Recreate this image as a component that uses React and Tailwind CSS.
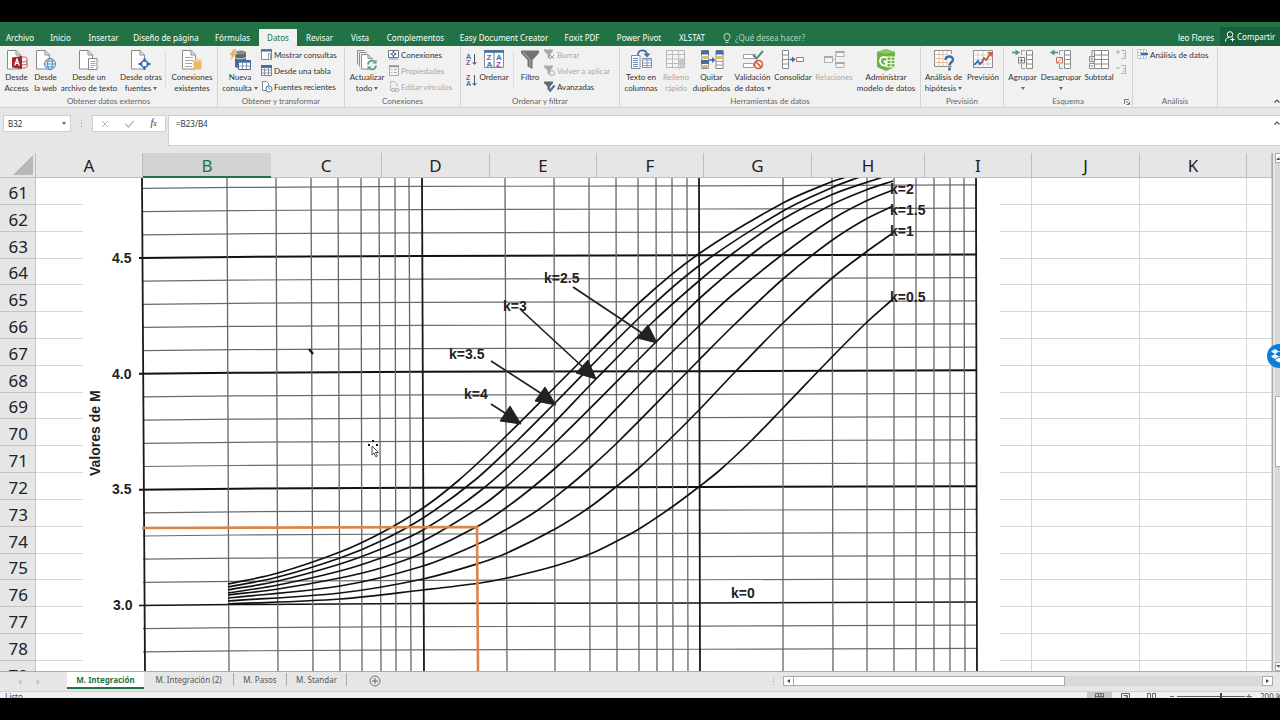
import { Fragment } from 'react';

const menuTabs = [
  { label: 'Archivo', width: 'w-[40px]' },
  { label: 'Inicio', width: 'w-[41px]' },
  { label: 'Insertar', width: 'w-[45px]' },
  { label: 'Diseño de página', width: 'w-[80px]' },
  { label: 'Fórmulas', width: 'w-[53px]' },
  { label: 'Datos', width: 'w-[38px]', active: true },
  { label: 'Revisar', width: 'w-[45px]' },
  { label: 'Vista', width: 'w-[36px]' },
  { label: 'Complementos', width: 'w-[75px]' },
  { label: 'Easy Document Creator', width: 'w-[102px]' },
  { label: 'Foxit PDF', width: 'w-[54px]' },
  { label: 'Power Pivot', width: 'w-[60px]' },
  { label: 'XLSTAT', width: 'w-[46px]' },
];

const columns = [
  { name: 'A', width: 'w-[107px]' },
  { name: 'B', width: 'w-[128px]', selected: true },
  { name: 'C', width: 'w-[111px]' },
  { name: 'D', width: 'w-[108px]' },
  { name: 'E', width: 'w-[107px]' },
  { name: 'F', width: 'w-[107px]' },
  { name: 'G', width: 'w-[108px]' },
  { name: 'H', width: 'w-[113px]' },
  { name: 'I', width: 'w-[107px]' },
  { name: 'J', width: 'w-[108px]' },
  { name: 'K', width: 'w-[107px]' },
  { name: '', width: '' },
];

const rows = Array.from({ length: 19 }, (_, i) => 61 + i);
const shortRows = [64, 69, 75];

/* ---------- Icons ---------- */

function Icon({ w = 22, h = 22, box = '0 0 22 22', children }) {
  return (
    <svg width={w} height={h} viewBox={box} fill="none" className="shrink-0" aria-hidden="true">
      {children}
    </svg>
  );
}

const Page = ({ x = 0 }) => (
  <path d={`M${x + 1.5} 1.5h8.5l4.5 4.5v14h-13zM${x + 10} 1.5v4.5h4.5`} fill="#fff" stroke="#8a8a8a" />
);

const AccessIcon = () => (
  <Icon>
    <Page />
    <path d="M14 9.5c0-2 7-2 7 0v8c0 2-7 2-7 0z" fill="#fff" stroke="#c0504d" />
    <path d="M14 12c2 1.3 5 1.3 7 0M14 15c2 1.3 5 1.3 7 0" stroke="#c0504d" />
    <path d="M6 8.5l10-1.5v13L6 18.5z" fill="#a4262c" />
    <path d="M8.7 16.5l2.3-6.3 2.3 6.3M9.5 14.4h3" stroke="#fff" strokeWidth="1.3" />
  </Icon>
);

const WebIcon = () => (
  <Icon>
    <Page />
    <circle cx="15" cy="15" r="5.5" fill="#fff" stroke="#4f86bf" />
    <ellipse cx="15" cy="15" rx="2.4" ry="5.5" stroke="#4f86bf" />
    <path d="M9.5 15h11M10.5 12.2h9M10.5 17.8h9" stroke="#4f86bf" />
  </Icon>
);

const TextFileIcon = () => (
  <Icon>
    <Page />
    <path d="M10.5 9.5h8.5v11h-8.5z" fill="#fff" stroke="#8a8a8a" />
    <path d="M12.5 12.5h5M12.5 14.5h5M12.5 16.5h5M12.5 18.5h3" stroke="#a5a5a5" />
  </Icon>
);

const OtherSourcesIcon = () => (
  <Icon>
    <Page />
    <path d="M14.5 10.5l4.5 4.5-4.5 4.5-4.5-4.5z" fill="#fff" stroke="#3a6fb0" strokeWidth="1.5" />
    <path d="M14.5 9v4M14.5 17v4M8.5 15h4M16.5 15h4" stroke="#3a6fb0" strokeWidth="1.8" />
  </Icon>
);

const ExistingIcon = () => (
  <Icon>
    <Page />
    <path d="M4 8.5h8M4 11.5h8M4 14.5h7M4 17.5h7" stroke="#a5a5a5" />
    <path d="M12.5 11v8c0 2.2 8 2.2 8 0v-8z" fill="#e8b964" />
    <ellipse cx="16.5" cy="11" rx="4" ry="1.6" fill="#f4d594" />
  </Icon>
);

const NewQueryIcon = () => (
  <Icon w={24} box="0 0 24 22">
    <path d="M7 3.5v14c0 2 11 2 11 0v-14z" fill="#666" />
    <ellipse cx="12.5" cy="3.5" rx="5.5" ry="2" fill="#8a8a8a" />
    <path d="M7 8.5c2 1.8 9 1.8 11 0" stroke="#ddd" />
    <path d="M5 0h4L6.5 4H9L2 12l1.5-5.5H1z" fill="#edb45c" stroke="#f1f1f1" strokeWidth=".6" />
    <path d="M10.5 11.5h12v9h-12z" fill="#fff" stroke="#3f6ea8" />
    <path d="M10.5 12.5h12" stroke="#3f6ea8" strokeWidth="2.5" />
    <path d="M14.5 13v7M18.5 13v7M11 17h11" stroke="#8c9db2" />
  </Icon>
);

const WindowIcon = () => (
  <Icon w={12} h={12} box="0 0 12 12">
    <path d="M.5.5h10v10H.5z" fill="#fff" stroke="#7d8b9b" />
    <path d="M0 1.5h11" stroke="#3f6ea8" strokeWidth="2" />
    <path d="M7.5 4.5h2v6h-2z" stroke="#9aa" />
  </Icon>
);

const TableIcon = () => (
  <Icon w={12} h={12} box="0 0 12 12">
    <path d="M.5.5h10v10H.5z" fill="#fff" stroke="#6d7f94" />
    <path d="M0 1.5h11" stroke="#3f6ea8" strokeWidth="3" />
    <path d="M3.5 2v9M7.5 2v9M0 5h11M0 8h11" stroke="#8796a8" />
  </Icon>
);

const RecentIcon = () => (
  <Icon w={12} h={12} box="0 0 12 12">
    <path d="M1.5.5h4l2 2v7h-6z" fill="#fff" stroke="#8a8a8a" />
    <circle cx="8" cy="8" r="3" fill="#fff" stroke="#4f7fb5" />
    <path d="M8 6v2h1.5" stroke="#4f7fb5" strokeWidth=".8" />
  </Icon>
);

const RefreshIcon = () => (
  <Icon>
    <path d="M1.5 15.5v-14h7M3.5 17.5v-14h7" stroke="#8a8a8a" />
    <path d="M5.5 5.5h6.5l4 4v10.5H5.5zM12 5.5v4h4" fill="#fff" stroke="#8a8a8a" />
    <circle cx="16" cy="16" r="5.5" fill="#f1f1f1" />
    <path d="M12 15.5a4 4 0 0 1 7-2.5M20 16.5a4 4 0 0 1-7 2.5" stroke="#5f9f80" strokeWidth="1.8" />
    <path d="M20.5 10.5v4h-4zM11.5 21.5v-4h4z" fill="#5f9f80" />
  </Icon>
);

const ConnIcon = () => (
  <Icon w={12} h={12} box="0 0 12 12">
    <path d="M.5 1.5h10v7H.5z" fill="#fff" stroke="#777" />
    <path d="M5.5 2v6M2.5 5h6" stroke="#3a6fb0" strokeWidth="1.5" />
    <circle cx="5.5" cy="5" r="1.5" fill="#fff" stroke="#3a6fb0" />
    <path d="M1 10h9" stroke="#999" />
  </Icon>
);

const PropsIcon = () => (
  <Icon w={12} h={12} box="0 0 12 12">
    <path d="M1.5.5h9v10h-9z" fill="#f6f6f6" stroke="#aaa" />
    <path d="M1 1.5h10" stroke="#999" strokeWidth="1.5" />
    <path d="M3 4.5h1.5M6 4.5h3M3 7.5h1.5M6 7.5h3" stroke="#aaa" />
  </Icon>
);

const LinksIcon = () => (
  <Icon w={12} h={12} box="0 0 12 12">
    <path d="M2.5 10V.5h4l2.5 2.5v3" stroke="#bbb" />
    <ellipse cx="5.5" cy="9" rx="2" ry="1.5" stroke="#aaa" />
    <ellipse cx="9" cy="9" rx="2" ry="1.5" stroke="#aaa" />
  </Icon>
);

// small A/Z stack with a down arrow
function SortIcon({ top, bottom, topColor, bottomColor }) {
  return (
    <Icon w={11} h={13} box="0 0 11 13">
      <text x="0" y="6" fontSize="7" fontWeight="bold" fontFamily="Liberation Sans, sans-serif" fill={topColor}>{top}</text>
      <text x="0" y="12" fontSize="7" fontWeight="bold" fontFamily="Liberation Sans, sans-serif" fill={bottomColor}>{bottom}</text>
      <path d="M8.5 1v10M6.5 9l2 2.5 2-2.5" stroke="#555" />
    </Icon>
  );
}

const SortBigIcon = () => (
  <Icon>
    <path d="M1.5 1.5h19v17h-19z" fill="#fff" stroke="#8a8a8a" />
    <path d="M1 2.5h20" stroke="#3f6ea8" strokeWidth="2.5" />
    <path d="M11 3v16" stroke="#777" />
    <g fontSize="8" fontWeight="bold" fontFamily="Liberation Sans, sans-serif">
      <text x="3.5" y="11" fill="#8a4fa3">Z</text>
      <text x="3.5" y="18" fill="#3a6fb0">A</text>
      <text x="13" y="11" fill="#3a6fb0">A</text>
      <text x="13" y="18" fill="#8a4fa3">Z</text>
    </g>
  </Icon>
);

const FilterIcon = () => (
  <Icon>
    <path d="M2 1.5h18v2.5l-6.5 7V20l-5-2.5V11L2 4z" fill="#737373" />
    <path d="M4 3l7 7.5v8" stroke="#b5b5b5" />
  </Icon>
);

function FunnelSmall({ color, mark }) {
  return (
    <Icon w={12} h={12} box="0 0 12 12">
      <path d="M0 .5h9v1.5L6 5.5V10L3.5 8.5v-3L0 2z" fill={color} />
      {mark}
    </Icon>
  );
}

const TextColumnsIcon = () => (
  <Icon>
    <path d="M8 6c0-6 8-6 9-1" stroke="#3a6fb0" strokeWidth="1.6" />
    <path d="M13.5 4.5h7L17 8.5z" fill="#3a6fb0" />
    <path d="M1.5 6.5h8.5v13H1.5z" fill="#fff" stroke="#8a8a8a" />
    <path d="M3 9.5h5M3 11.5h5M3 13.5h5M3 15.5h5M3 17.5h5" stroke="#5f8fc4" />
    <path d="M12.5 9.5h9v9h-9z" fill="#fff" stroke="#8a8a8a" />
    <path d="M12 11h10M12.5 14h9M12.5 16.5h9M17 10v9" stroke="#7fa3cc" strokeWidth="1.2" />
  </Icon>
);

const FlashFillIcon = () => (
  <Icon>
    <path d="M1.5 1.5h18v17h-18z" fill="#f4f4f4" stroke="#b5b5b5" />
    <path d="M1.5 5.5h18M1.5 10h18M1.5 14.5h18M7.5 1.5v17M13.5 1.5v17" stroke="#bdbdbd" />
    <path d="M15 10h6l-3 4h3l-7 7.5 1.5-5h-3z" fill="#c4c4c4" />
  </Icon>
);

const DuplicatesIcon = () => (
  <Icon w={24} box="0 0 24 22">
    <path d="M1.5 1.5h7v18h-7zM16 1.5h7v18h-7z" fill="#fff" stroke="#8a8a8a" />
    <path d="M1 3.5h8M1 13h8M16 3.5h7.5" stroke="#3f6ea8" strokeWidth="4" />
    <path d="M1 8.5h8M1 17.5h8M16 8.5h7.5" stroke="#e0b973" strokeWidth="3" />
    <path d="M16 12.5h7M16 16h7" stroke="#9a9a9a" />
    <path d="M9 11h5" stroke="#3a6fb0" strokeWidth="1.5" />
    <path d="M12 8l3.5 3-3.5 3z" fill="#3a6fb0" />
  </Icon>
);

const ValidationIcon = () => (
  <Icon>
    <path d="M1.5 5.5h12v4h-12zM1.5 14.5h10v4h-10z" fill="#fff" stroke="#a0a0a0" />
    <path d="M11 6l3.5 3.5L21 2" stroke="#4f9678" strokeWidth="2" />
    <circle cx="16.5" cy="15.5" r="4" fill="#f1f1f1" stroke="#cf5b3c" strokeWidth="1.6" />
    <path d="M13.7 12.7l5.6 5.6" stroke="#cf5b3c" strokeWidth="1.6" />
  </Icon>
);

const ConsolidateIcon = () => (
  <Icon w={24} box="0 0 24 22">
    <path d="M1.5 1.5h6v18h-6zM1.5 6h6M1.5 10.5h6M1.5 15h6" fill="#fff" stroke="#8a8a8a" />
    <path d="M8.5 10.5h4" stroke="#3a6fb0" strokeWidth="1.5" />
    <path d="M11 7.5l3.5 3-3.5 3z" fill="#3a6fb0" />
    <path d="M15.5 8.5h7v4h-7z" fill="#fff" stroke="#cf6a50" />
  </Icon>
);

const RelationsIcon = () => (
  <Icon>
    <path d="M9 10.5h3.5M12.5 5v11" stroke="#bbb" />
    <path d="M1.5 7.5h8v6h-8zM13 2.5h8v5h-8zM13 13.5h8v5h-8z" fill="#f6f6f6" stroke="#b0b0b0" />
    <path d="M1 8h9M12.5 3h9M12.5 14h9" stroke="#aaa" strokeWidth="2" />
  </Icon>
);

const DataModelIcon = () => (
  <Icon>
    <path d="M2 3l9-3 9 3v15l-9 4-9-4z" fill="#6cb33f" />
    <path d="M2 3l9-3 9 3-9 2z" fill="#8cc866" />
    <path d="M12 8.5c-5-1.5-7 .5-7 3.5s2 5 6 4.5v-4H8.5" stroke="#fff" strokeWidth="1.8" />
    <path d="M12 8h8v10h-8zM12 11.3h8M12 14.6h8M16 8v10" fill="#6cb33f" stroke="#fff" />
  </Icon>
);

const WhatIfIcon = () => (
  <Icon>
    <path d="M1.5 1.5h17v16h-17z" fill="#fff" stroke="#8a8a8a" />
    <path d="M1.5 5.5h17M1.5 9.5h17M1.5 13.5h17M6 1.5v16M10 1.5v16M14 1.5v16" stroke="#e0b9a0" />
    <path d="M12.5 11c0-5 8-5 8-.5 0 3-4 2.5-4 6.500" stroke="#f1f1f1" strokeWidth="5" />
    <path d="M12.5 11c0-4.5 7.5-4.5 7.5-.5 0 3-3.5 2.5-3.5 6" stroke="#3a6fb0" strokeWidth="2.4" />
    <path d="M16.5 18.5v3" stroke="#3a6fb0" strokeWidth="2.6" />
  </Icon>
);

const ForecastIcon = () => (
  <Icon>
    <path d="M1.5 1.5h19v17h-19z" fill="#fff" stroke="#8a8a8a" />
    <path d="M1.5 6h19M1.5 10.5h19M1.5 15h19M6 1.5v17M11 1.5v17M16 1.5v17" stroke="#ccc" />
    <path d="M2 16l4-4 2 3 3-3" stroke="#3a6fb0" strokeWidth="1.8" />
    <path d="M10 13l2-4 2 2 5-7" stroke="#cf5b3c" strokeWidth="1.8" />
    <path d="M15 3h5.5v5.500z" fill="#cf5b3c" />
  </Icon>
);

function GroupIcon({ out }) {
  return (
    <Icon>
      <path d="M14.5 1.5h6v18h-6zM14.5 6h6M14.5 10.5h6M14.5 15h6" fill="#fff" stroke="#8a8a8a" />
      <path d="M13 1.5h-3.5V6M9.5 15v4.5H13" stroke="#9a9a9a" />
      {out ? (
        <>
          <path d="M2 3.5h6" stroke="#4f9678" strokeWidth="1.6" />
          <path d="M4.5.5L0 3.5l4.5 3z" fill="#4f9678" />
          <path d="M6.5 8.5h6v5.500h-6zM7 14l5.500-6" fill="#fff" stroke="#cf6a50" />
        </>
      ) : (
        <>
          <path d="M0 3.5h6" stroke="#4f9678" strokeWidth="1.6" />
          <path d="M3.5.5L8 3.5l-4.500 3z" fill="#4f9678" />
          <path d="M6.5 8.5h6v5.500h-6zM9.500 9.500v4M7.500 11.300h4" fill="#fff" stroke="#777" />
        </>
      )}
    </Icon>
  );
}

const SubtotalIcon = () => (
  <Icon>
    <path d="M6.5 1.5h14v18h-14zM6.5 6h14M6.5 10.5h14M6.5 15h14M13.5 1.5v18" fill="#fff" stroke="#8a8a8a" />
    <path d="M1.5 7.5h5v5h-5zM1.5 14.5h5v5h-5zM4 8.5v3M2.5 10h3M2.5 17h3M4 7V1.5h2" fill="#fff" stroke="#8a8a8a" />
  </Icon>
);

const DetailIcon = ({ plus }) => (
  <Icon w={11} h={11} box="0 0 11 11">
    <path d={plus ? 'M0 3h4M2 1v4' : 'M0 4h4'} stroke="#aaa" />
    <path d="M5 1.5h5M7 4.5h3M5 9.5h5M7 7h3M9.5 1v9" stroke="#b8b8b8" />
  </Icon>
);

const AnalysisIcon = () => (
  <Icon w={12} h={12} box="0 0 12 12">
    <path d="M.5.5h9v9h-9zM.5 3.5h9M.5 6.5h9M3.5.5v9M6.5.5v9" fill="#fff" stroke="#bcc5d0" />
    <path d="M4 5h7" stroke="#3a6fb0" strokeWidth="2" />
  </Icon>
);

const Caret = ({ className = '' }) => (
  <svg width="4" height="3" viewBox="0 0 4 3" className={`inline-block align-middle ${className}`} aria-hidden="true">
    <path d="M0 0h4L2 3z" fill="#666" />
  </svg>
);

/* ---------- Ribbon pieces ---------- */

function BigButton({ icon, lines, width, caret, disabled }) {
  return (
    <button
      type="button"
      disabled={disabled}
      className={`flex shrink-0 flex-col items-center pt-[2px] whitespace-nowrap ${width} ${disabled ? 'text-[#a8a8a8]' : 'text-[#333]'}`}
    >
      <span className="mb-px">{icon}</span>
      {lines.map((line, i) => (
        <span key={i} className="leading-[11px]">
          {line}
          {caret && i === lines.length - 1 && <Caret className={line ? 'ml-[2px]' : ''} />}
        </span>
      ))}
    </button>
  );
}

function SmallButton({ icon, label, disabled }) {
  return (
    <button
      type="button"
      disabled={disabled}
      className={`flex h-4 items-center gap-px whitespace-nowrap ${disabled ? 'text-[#a8a8a8]' : 'text-[#333]'}`}
    >
      {icon}
      {label}
    </button>
  );
}

function Group({ label, width, launcher, children }) {
  return (
    <section className={`relative mt-px flex shrink-0 flex-col justify-between border-r border-[#d2d2d2] ${width}`}>
      <div className="flex h-[49px] items-start px-px">{children}</div>
      <h2 className="text-center leading-[11px] text-[#666]">{label}</h2>
      {launcher && (
        <svg width="6" height="6" viewBox="0 0 6 6" className="absolute right-[2px] bottom-[2px]" fill="none" aria-hidden="true">
          <path d="M.5 5V.5H5M2 2l3 3M5.500 2.500v3h-3" stroke="#777" />
        </svg>
      )}
    </section>
  );
}

const Divider = () => <div className="mx-[2px] mt-[4px] h-[38px] w-px shrink-0 bg-[#dcdcdc]" />;

function Ribbon() {
  return (
    <div className="flex h-[62px] shrink-0 overflow-hidden border-b border-[#d2d2d2] bg-[#f1f1f1] font-['Lato','Noto_Sans',sans-serif]">
      <Group label="Obtener datos externos" width="w-[218px]">
        <BigButton icon={<AccessIcon />} lines={['Desde', 'Access']} width="w-[31px]" />
        <BigButton icon={<WebIcon />} lines={['Desde', 'la web']} width="w-[27px]" />
        <BigButton icon={<TextFileIcon />} lines={['Desde un', 'archivo de texto']} width="w-[60px]" />
        <BigButton icon={<OtherSourcesIcon />} lines={['Desde otras', 'fuentes']} width="w-[44px]" caret />
        <Divider />
        <BigButton icon={<ExistingIcon />} lines={['Conexiones', 'existentes']} width="w-[48px]" />
      </Group>
      <Group label="Obtener y transformar" width="w-[127px]">
        <BigButton icon={<NewQueryIcon />} lines={['Nueva', 'consulta']} width="w-[42px]" caret />
        <div>
          <SmallButton icon={<WindowIcon />} label="Mostrar consultas" />
          <SmallButton icon={<TableIcon />} label="Desde una tabla" />
          <SmallButton icon={<RecentIcon />} label="Fuentes recientes" />
        </div>
      </Group>
      <Group label="Conexiones" width="w-[116px]">
        <BigButton icon={<RefreshIcon />} lines={['Actualizar', 'todo']} width="w-[42px]" caret />
        <div>
          <SmallButton icon={<ConnIcon />} label="Conexiones" />
          <SmallButton icon={<PropsIcon />} label="Propiedades" disabled />
          <SmallButton icon={<LinksIcon />} label="Editar vínculos" disabled />
        </div>
      </Group>
      <Group label="Ordenar y filtrar" width="w-[159px]">
        <div className="flex w-[15px] flex-col items-end gap-2 pt-[6px]">
          <button type="button" aria-label="Ordenar de A a Z">
            <SortIcon top="A" bottom="Z" topColor="#3a6fb0" bottomColor="#8a4fa3" />
          </button>
          <button type="button" aria-label="Ordenar de Z a A">
            <SortIcon top="Z" bottom="A" topColor="#8a4fa3" bottomColor="#3a6fb0" />
          </button>
        </div>
        <BigButton icon={<SortBigIcon />} lines={['Ordenar']} width="w-[34px]" />
        <Divider />
        <BigButton icon={<FilterIcon />} lines={['Filtro']} width="w-[28px]" />
        <div>
          <SmallButton
            icon={<FunnelSmall color="#aaa" mark={<path d="M6 6l4 4M10 6l-4 4" stroke="#999" />} />}
            label="Borrar"
            disabled
          />
          <SmallButton
            icon={<FunnelSmall color="#aaa" mark={<circle cx="8" cy="8" r="2.5" fill="#f1f1f1" stroke="#aaa" />} />}
            label="Volver a aplicar"
            disabled
          />
          <SmallButton
            icon={<FunnelSmall color="#666" mark={<path d="M5.5 10.5l5-6" stroke="#3a6fb0" strokeWidth="2" />} />}
            label="Avanzadas"
          />
        </div>
      </Group>
      <Group label="Herramientas de datos" width="w-[301px]">
        <BigButton icon={<TextColumnsIcon />} lines={['Texto en', 'columnas']} width="w-[40px]" />
        <BigButton icon={<FlashFillIcon />} lines={['Relleno', 'rápido']} width="w-[30px]" disabled />
        <BigButton icon={<DuplicatesIcon />} lines={['Quitar', 'duplicados']} width="w-[41px]" />
        <BigButton icon={<ValidationIcon />} lines={['Validación', 'de datos']} width="w-[41px]" caret />
        <BigButton icon={<ConsolidateIcon />} lines={['Consolidar']} width="w-[40px]" />
        <BigButton icon={<RelationsIcon />} lines={['Relaciones']} width="w-[42px]" disabled />
        <BigButton icon={<DataModelIcon />} lines={['Administrar', 'modelo de datos']} width="w-[62px]" />
      </Group>
      <Group label="Previsión" width="w-[83px]">
        <BigButton icon={<WhatIfIcon />} lines={['Análisis de', 'hipótesis']} width="w-[43px]" caret />
        <BigButton icon={<ForecastIcon />} lines={['Previsión']} width="w-[36px]" />
      </Group>
      <Group label="Esquema" width="w-[129px]" launcher>
        <BigButton icon={<GroupIcon />} lines={['Agrupar', '']} width="w-[35px]" caret />
        <BigButton icon={<GroupIcon out />} lines={['Desagrupar', '']} width="w-[42px]" caret />
        <BigButton icon={<SubtotalIcon />} lines={['Subtotal']} width="w-[34px]" />
        <div className="flex flex-col gap-1 pt-[2px]">
          <DetailIcon plus />
          <DetailIcon />
        </div>
      </Group>
      <Group label="Análisis" width="w-[85px]">
        <div className="pl-[3px]">
          <SmallButton icon={<AnalysisIcon />} label="Análisis de datos" />
        </div>
      </Group>
      <button type="button" aria-label="Contraer la cinta" className="ml-auto flex flex-col justify-end pb-1">
        <Icon w={6} h={4} box="0 0 6 4">
          <path d="M.5 3.5L3 1l2.5 2.5" stroke="#555" strokeWidth="1.2" />
        </Icon>
      </button>
    </div>
  );
}

function MenuBar() {
  return (
    <nav className="flex h-[24px] shrink-0 items-end bg-[#217346] text-white">
      {menuTabs.map((tab) => (
        <button
          key={tab.label}
          type="button"
          className={`h-[17px] shrink-0 whitespace-nowrap ${tab.width} ${tab.active ? 'bg-[#f1f1f1] text-[#217346]' : ''}`}
        >
          {tab.label}
        </button>
      ))}
      <label className="ml-[8px] flex h-[17px] items-center gap-1 text-[#b5d3c2]">
        <Icon w={8} h={10} box="0 0 8 10">
          <path d="M2.5 7.5C2.5 6 1 5.5 1 3.5a3 3 0 0 1 6 0c0 2-1.5 2.5-1.5 4zM2.5 9.5h3" stroke="#c8dfd2" />
        </Icon>
        <input
          type="text"
          aria-label="¿Qué desea hacer?"
          placeholder="¿Qué desea hacer?"
          className="w-[90px] bg-transparent outline-none placeholder:text-[#b5d3c2]"
        />
      </label>
      <span className="ml-auto h-[17px] pr-[6px] leading-[17px]">leo Flores</span>
      <button type="button" className="flex h-[19px] w-[60px] items-center gap-[2px] overflow-hidden bg-[#17603a] pl-[5px] whitespace-nowrap">
        <Icon w={10} h={11} box="0 0 10 11">
          <circle cx="5" cy="3.5" r="2.8" stroke="#fff" />
          <path d="M.5 10.5c0-3 2-4 3.5-4M7.5 6.5v4M5.5 8.5h4" stroke="#fff" />
        </Icon>
        Compartir
      </button>
    </nav>
  );
}

function FormulaBar() {
  return (
    <div className="flex shrink-0 items-start pt-[7px] pb-[7px] pl-[3px] text-[#333]">
      <div className="flex h-[17px] w-[68px] items-center border border-[#cfcfcf] bg-white pr-[4px] pl-[4px]">
        <input type="text" aria-label="Cuadro de nombres" defaultValue="B32" className="min-w-0 flex-1 outline-none" />
        <button type="button" aria-label="Ver nombres" className="flex">
          <Caret />
        </button>
      </div>
      <div className="flex w-[21px] flex-col items-center gap-[2px] pt-[5px]">
        <i className="size-px bg-[#999]" />
        <i className="size-px bg-[#999]" />
        <i className="size-px bg-[#999]" />
      </div>
      <div className="flex h-[17px] w-[74px] items-center justify-around border border-[#cfcfcf] bg-white">
        <button type="button" aria-label="Cancelar">
          <Icon w={8} h={8} box="0 0 8 8"><path d="M1 1l6 6M7 1L1 7" stroke="#b5b5b5" /></Icon>
        </button>
        <button type="button" aria-label="Introducir">
          <Icon w={9} h={8} box="0 0 9 8"><path d="M.5 4l3 3 5-6" stroke="#b5b5b5" strokeWidth="1.3" /></Icon>
        </button>
        <button type="button" aria-label="Insertar función" className="font-['Liberation_Serif',serif] text-[10px] leading-[12px] italic">
          f<span className="text-[8px]">x</span>
        </button>
      </div>
      <div className="ml-[2px] flex h-[31px] flex-1 items-start border border-r-0 border-[#cfcfcf] bg-white pl-[7px]">
        <input type="text" aria-label="Barra de fórmulas" defaultValue="=B23/B4" className="h-[15px] min-w-0 flex-1 outline-none" />
        <button type="button" aria-label="Contraer barra de fórmulas" className="pt-[5px]">
          <Icon w={6} h={4} box="0 0 6 4"><path d="M.5 3.5L3 1l2.5 2.5" stroke="#555" strokeWidth="1.2" /></Icon>
        </button>
      </div>
    </div>
  );
}

/* ---------- Chart ---------- */

// [x at the top edge, x at the bottom edge]
const minorX = [
  [227, 229], [276, 278], [311, 313], [338, 340], [361, 362], [379, 381], [395, 396], [409, 411],
  [505, 507], [554, 555], [589, 590], [616, 617], [638, 639], [656, 657], [672, 673], [687, 688],
  [783, 783], [832, 833], [867, 867], [894, 894], [916, 916], [934, 934], [950, 950], [964, 965],
];
const majorX = [[142, 145], [422, 424], [699, 700], [976, 977]];

const curves = [
  { k: 0.5, pts: [[228, 604], [340, 599], [423, 590], [480, 583], [507, 578], [555, 566], [590, 554], [617, 541], [639, 529], [672, 507], [700, 486], [720, 470], [752, 440], [783, 408], [831, 358], [866, 323], [893, 299]] },
  { k: 1, pts: [[228, 601], [340, 593], [423, 579], [480, 563], [507, 553], [555, 529], [590, 507], [617, 486], [639, 468], [669, 440], [700, 409], [735, 372], [783, 323], [831, 279], [866, 252], [893, 233]] },
  { k: 1.5, pts: [[228, 598], [340, 586], [423, 566], [480, 543], [507, 529], [538, 510], [569, 486], [590, 468], [620, 440], [700, 359], [735, 324], [783, 279], [831, 241], [866, 219], [893, 206]] },
  { k: 2, pts: [[228, 595], [278, 589], [340, 578], [381, 568], [423, 553], [480, 525], [507, 507], [533, 487], [560, 464], [586, 440], [655, 369], [700, 325], [730, 297], [783, 254], [831, 220], [866, 201], [893, 190]] },
  { k: 2.5, pts: [[228, 593], [278, 585], [340, 571], [381, 558], [423, 541], [480, 507], [507, 486], [558, 440], [656, 342], [700, 298], [752, 254], [783, 232], [831, 205], [866, 190], [893, 181]] },
  { k: 3, pts: [[228, 590], [278, 581], [340, 564], [381, 549], [423, 530], [480, 491], [537, 440], [596, 379], [655, 320], [700, 280], [732, 254], [783, 219], [831, 195], [880, 178], [896, 173]] },
  { k: 3.5, pts: [[228, 587], [278, 577], [340, 558], [381, 541], [423, 518], [475, 480], [518, 440], [556, 402], [640, 317], [700, 265], [783, 211], [831, 188], [857, 178], [880, 170]] },
  { k: 4, pts: [[228, 584], [278, 573], [340, 552], [381, 533], [423, 508], [459, 480], [502, 440], [567, 375], [640, 302], [700, 253], [783, 203], [831, 182], [843, 178], [870, 169]] },
];

const arrows = [
  { line: 'M573 287L645 335', head: 'M657 343L637 338L648 325Z' },
  { line: 'M521 310L586 370', head: 'M596 379L576 373L588 360Z' },
  { line: 'M491 361L542 394', head: 'M556 405L535 401L545 387Z' },
  { line: 'M491 404L508 415', head: 'M521 424L500 421L510 406Z' },
];

const chartLabels = [
  [112, 263, '4.5'], [112, 379, '4.0'], [112, 494, '3.5'], [113, 610, '3.0'],
  [544, 283, 'k=2.5'], [503, 311, 'k=3'], [449, 359, 'k=3.5'], [464, 399, 'k=4'],
  [890, 194, 'k=2'], [890, 215, 'k=1.5'], [890, 236, 'k=1'], [890, 302, 'k=0.5'], [731, 598, 'k=0'],
];

function smooth(pts) {
  let d = `M${pts[0][0]} ${pts[0][1]}`;
  for (let i = 0; i < pts.length - 1; i++) {
    const p0 = pts[i - 1] || pts[i];
    const p1 = pts[i];
    const p2 = pts[i + 1];
    const p3 = pts[i + 2] || p2;
    // control points spaced by the x step so uneven samples stay smooth
    const dx = (p2[0] - p1[0]) / 3;
    const m1 = (p2[1] - p0[1]) / (p2[0] - p0[0]);
    const m2 = (p3[1] - p1[1]) / (p3[0] - p1[0]);
    d += `C${p1[0] + dx} ${p1[1] + dx * m1} ${p2[0] - dx} ${p2[1] - dx * m2} ${p2[0]} ${p2[1]}`;
  }
  return d;
}

function Chart() {
  const levels = Array.from({ length: 21 }, (_, i) => i - 2);
  return (
    <svg
      viewBox="83 178 917 493"
      className="absolute top-[25px] left-[83px] h-[493px] w-[917px] bg-white"
      fill="none"
      role="img"
      aria-label="Valores de M"
    >
      {levels.map((n) => {
        const y = 605.5 - n * 23.17;
        const major = n % 5 === 0;
        return (
          <path
            key={n}
            d={`M${major ? 139 : 143} ${y}L235 ${y - 1}L420 ${y - 2}L700 ${y - 2.6}L977 ${y - 3.5}`}
            stroke={major ? '#111' : '#6a6a6a'}
            strokeWidth={major ? (n === 0 ? 1.5 : 2) : 1.2}
          />
        );
      })}
      {minorX.map(([a, b]) => (
        <path key={a} d={`M${a} 178L${b} 671`} stroke="#666" strokeWidth="1.3" />
      ))}
      {majorX.map(([a, b]) => (
        <path key={a} d={`M${a} 178L${b} 671`} stroke="#1a1a1a" strokeWidth="1.8" />
      ))}
      {curves.map((c) => (
        <path key={c.k} d={smooth(c.pts)} stroke="#111" strokeWidth="1.7" />
      ))}
      {arrows.map((a) => (
        <Fragment key={a.head}>
          <path d={a.line} stroke="#222" strokeWidth="1.7" />
          <path d={a.head} fill="#222" stroke="#222" />
        </Fragment>
      ))}
      <path d="M309 349L313 354" stroke="#111" strokeWidth="2.2" />
      <path d="M142 528L477 527L478 671" stroke="#dd8448" strokeWidth="2.6" />
      <g fontFamily="Liberation Sans, Arial, sans-serif" fontSize="14" fontWeight="bold" fill="#222">
        {chartLabels.map(([x, y, text]) => (
          <text key={text} x={x} y={y}>{text}</text>
        ))}
        <text transform="translate(100 476) rotate(-90)">Valores de M</text>
      </g>
      {/* pointer */}
      <path d="M372 446v9l2-2 2 4 1.5-1-2-3.5h3z" fill="#fff" stroke="#222" strokeWidth=".8" />
      <path d="M372 440h2v2h-2zM368 444h2v2h-2zM376 444h2v2h-2z" fill="#111" />
    </svg>
  );
}

/* ---------- Sheet ---------- */

function Sheet() {
  return (
    <div className="flex min-h-0 flex-1">
      <div className="relative min-w-0 flex-1 overflow-hidden border-r border-[#ababab] bg-white">
        <table className="w-full table-fixed border-separate border-spacing-0 text-[17px] leading-[20px]">
          <thead>
            <tr className="h-[25px] bg-[#e6e6e6] text-[#222]">
              <th className="w-[36px] border-r border-b border-[#bdbdbd] p-0 pr-[2px]" aria-label="Seleccionar todo">
                <svg width="20" height="20" viewBox="0 0 20 20" className="ml-auto" aria-hidden="true">
                  <path d="M20 0v20H0z" fill="#b7b7b7" />
                </svg>
              </th>
              {columns.map((c) => (
                <th
                  key={c.name || 'rest'}
                  scope="col"
                  className={`p-0 pt-[2px] font-normal ${c.width} ${
                    c.selected
                      ? 'border-b-2 border-[#217346] bg-[#d2d2d2] text-[#217346]'
                      : 'border-r border-b border-[#bdbdbd]'
                  }`}
                >
                  {c.name}
                </th>
              ))}
            </tr>
          </thead>
          <tbody>
            {rows.map((r) => (
              <tr key={r} className={shortRows.includes(r) ? 'h-[26px]' : 'h-[27px]'}>
                <th scope="row" className="border-r border-b border-[#c4c4c4] bg-[#e6e6e6] p-0 pt-[3px] pr-[7px] text-right font-normal text-[#222]">
                  {r}
                </th>
                {columns.map((c) => (
                  <td key={c.name || 'rest'} className="border-r border-b border-[#d6d6d6] p-0" />
                ))}
              </tr>
            ))}
          </tbody>
        </table>
        <Chart />
      </div>
      <div className="flex w-[7px] flex-col bg-[#e6e6e6] pl-[2px]">
        <button type="button" aria-label="Subir" className="flex h-[10px] items-center justify-center border border-r-0 border-[#ababab] bg-white">
          <svg width="4" height="3" viewBox="0 0 4 3" aria-hidden="true"><path d="M0 3h4L3 0z" fill="#555" /></svg>
        </button>
        <div className="flex-[234] bg-[#d9d9d9]" />
        <div className="flex-[70] border border-r-0 border-[#ababab] bg-white" />
        <div className="flex-[196] bg-[#d9d9d9]" />
        <button type="button" aria-label="Bajar" className="flex h-[9px] items-center justify-center border border-r-0 border-[#ababab] bg-white">
          <svg width="4" height="3" viewBox="0 0 4 3" aria-hidden="true"><path d="M0 0h4L3 3z" fill="#555" /></svg>
        </button>
      </div>
    </div>
  );
}

function SheetTabs() {
  const tab = 'border-r border-[#ababab] text-[#555] h-[13px] leading-[13px] whitespace-nowrap';
  return (
    <div className="flex h-[20px] shrink-0 border-t border-[#ababab] bg-[#e6e6e6]">
      <div className="flex w-[67px] items-center gap-[14px] pl-[18px] text-[#b5b5b5]">
        <Icon w={4} h={6} box="0 0 4 6"><path d="M3.5 0v6L0 3z" fill="#c4c4c4" /></Icon>
        <Icon w={4} h={6} box="0 0 4 6"><path d="M.5 0v6L4 3z" fill="#c4c4c4" /></Icon>
      </div>
      <button type="button" className="h-[17px] w-[77px] border-b-2 border-[#217346] bg-white font-bold whitespace-nowrap text-[#217346]">
        M. Integración
      </button>
      <div className="flex pt-px">
        <button type="button" className={`w-[90px] ${tab}`}>M. Integración (2)</button>
        <button type="button" className={`w-[53px] ${tab}`}>M. Pasos</button>
        <button type="button" className={`w-[60px] ${tab}`}>M. Standar</button>
      </div>
      <button type="button" aria-label="Hoja nueva" className="ml-[22px] flex h-[17px] items-center">
        <Icon w={12} h={12} box="0 0 12 12">
          <circle cx="6" cy="6" r="5" stroke="#777" />
          <path d="M6 3v6M3 6h6" stroke="#666" />
        </Icon>
      </button>
      <div className="ml-auto flex h-[18px] w-[507px] items-center">
        <div className="mr-[9px] flex flex-col gap-[2px]">
          <i className="size-px bg-[#999]" />
          <i className="size-px bg-[#999]" />
          <i className="size-px bg-[#999]" />
        </div>
        <button type="button" aria-label="Desplazar a la izquierda" className="flex h-[10px] w-[11px] items-center justify-center border border-[#ababab] bg-white">
          <svg width="3" height="4" viewBox="0 0 3 4" aria-hidden="true"><path d="M3 0v4L0 2z" fill="#444" /></svg>
        </button>
        <div className="h-[10px] w-[271px] border border-l-0 border-[#ababab] bg-white" />
        <div className="h-[10px] flex-1 bg-[#d9d9d9]" />
        <button type="button" aria-label="Desplazar a la derecha" className="mr-[7px] flex h-[10px] w-[11px] items-center justify-center border border-[#ababab] bg-white">
          <svg width="3" height="4" viewBox="0 0 3 4" aria-hidden="true"><path d="M0 0v4l3-2z" fill="#444" /></svg>
        </button>
      </div>
    </div>
  );
}

function StatusBar() {
  return (
    <div className="flex h-[7px] shrink-0 items-start overflow-hidden border-t border-[#cfcfcf] bg-[#f1f1f1] leading-[10px] text-[#444]">
      <span className="pl-[5px]">Listo</span>
      <div className="ml-auto flex items-start">
        <span className="flex w-[25px] justify-center bg-[#c8c8c8] pt-px">
          <Icon w={9} h={9} box="0 0 9 9"><path d="M.5.5h8v8h-8zM.5 3.5h8M3.5.5v8M6 .5v8" stroke="#666" /></Icon>
        </span>
        <span className="flex w-[26px] justify-center pt-px">
          <Icon w={9} h={9} box="0 0 9 9"><path d="M.5.5h8v8h-8zM2.5 2.5h4v6M4.5 4h2" stroke="#666" /></Icon>
        </span>
        <span className="flex w-[26px] justify-center pt-px">
          <Icon w={9} h={9} box="0 0 9 9"><path d="M.5 9V.5h3V9M5.5 9V.5h3V9" stroke="#666" /></Icon>
        </span>
        <span className="flex pt-px pl-[6px]">
          <Icon w={84} h={6} box="0 0 84 6"><path d="M0 3.5h4M7 3.5h68M76 3.5h6M79 1v5" stroke="#666" /><path d="M51 0v6" stroke="#444" strokeWidth="2" /></Icon>
        </span>
        <span className="w-[26px] overflow-hidden pl-[6px] whitespace-nowrap">200 %</span>
      </div>
    </div>
  );
}

export default function App() {
  return (
    <div className="relative flex h-screen flex-col overflow-hidden bg-black py-[22px] font-['Noto_Sans','Open_Sans',sans-serif] text-[8px]">
      <div className="flex min-h-0 flex-1 flex-col bg-[#e6e6e6]">
        <MenuBar />
        <Ribbon />
        <FormulaBar />
        <Sheet />
        <SheetTabs />
        <StatusBar />
      </div>
      {/* Dropbox badge hanging off the right edge */}
      <button
        type="button"
        aria-label="Dropbox"
        className="absolute top-[344px] right-[-11px] flex size-[24px] items-center justify-center rounded-full bg-[#0d7ddb]"
      >
        <Icon w={16} h={14} box="0 0 16 14">
          <path d="M4 0l4 2.5L4 5 0 2.500zM12 0l4 2.500L12 5 8 2.500zM4 5l4 2.500L4 10 0 7.500zM12 5l4 2.500-4 2.500-4-2.500zM8 8.500l4 2.500-4 2.500L4 11z" fill="#fff" />
        </Icon>
      </button>
    </div>
  );
}
